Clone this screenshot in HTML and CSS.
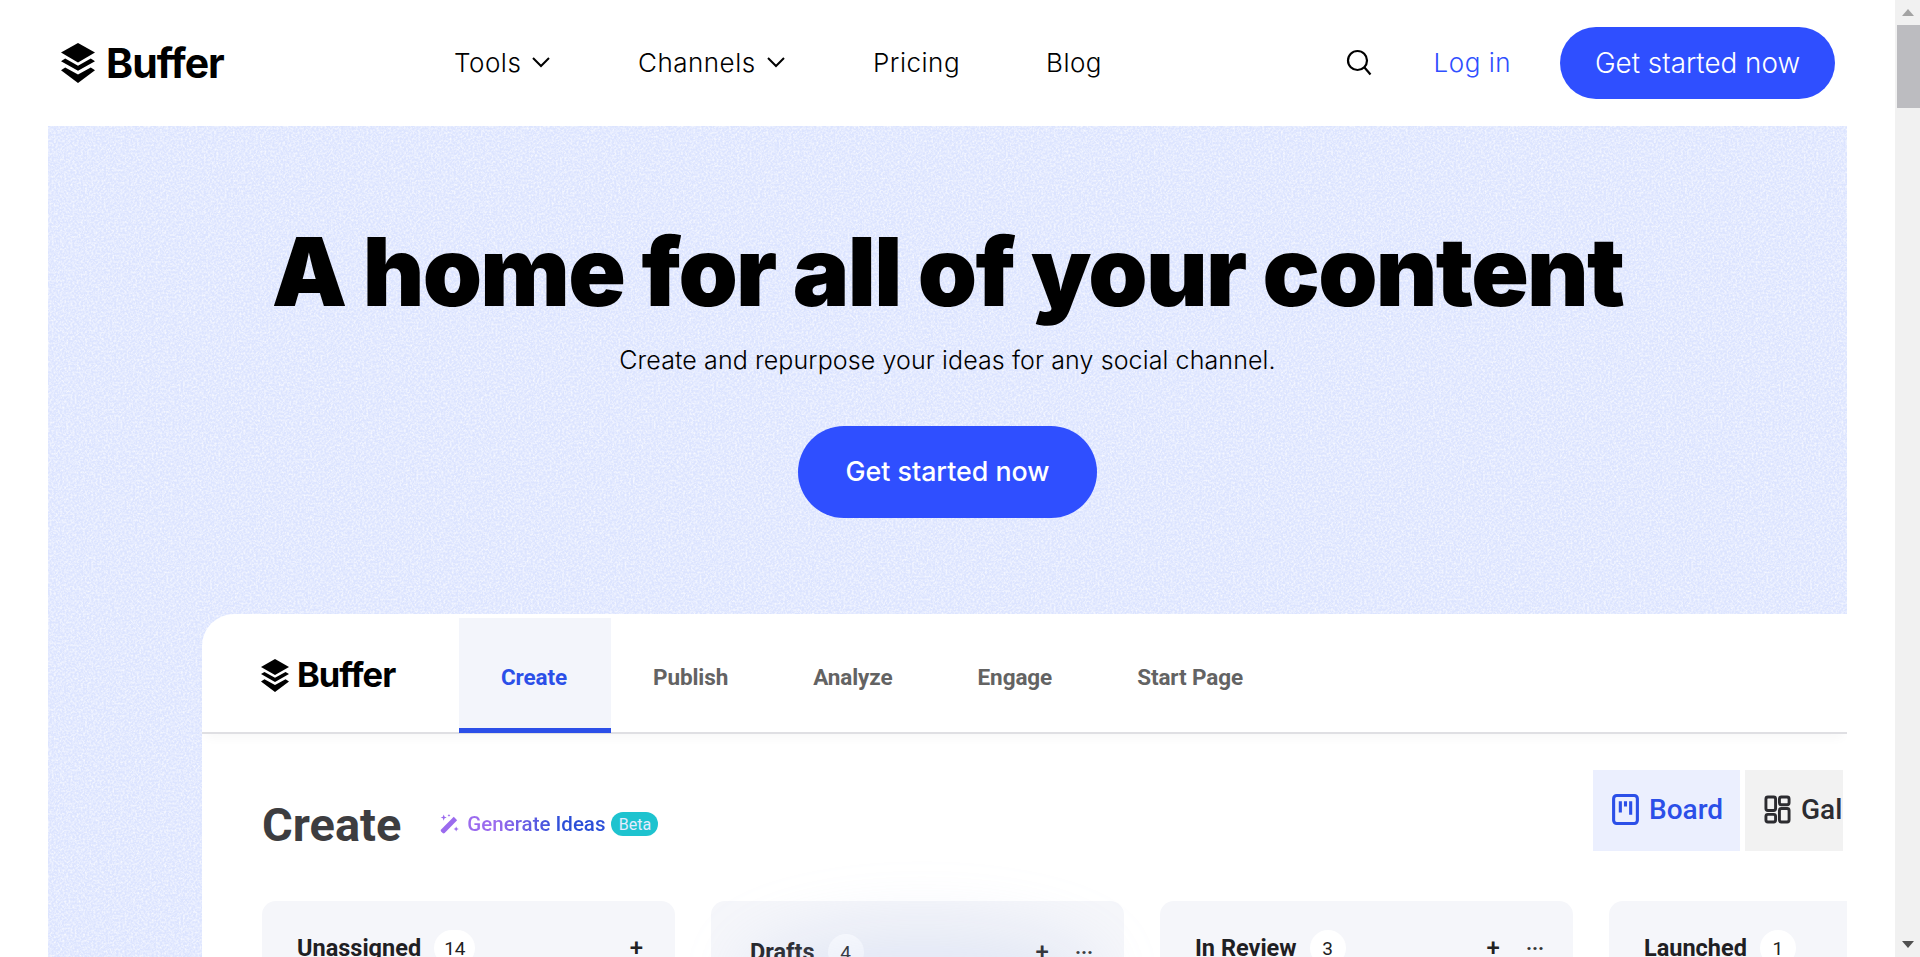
FILE: index.html
```html
<!DOCTYPE html>
<html lang="en">
<head>
<meta charset="utf-8">
<title>Buffer</title>
<link rel="stylesheet" href="styles.css">
</head>
<body>
<div class="page">
  <div class="main">
    <header class="site-header">
      <a class="logo">
        <svg class="logo-mark" viewBox="0 0 34 40"><path d="M17 0 34 9.6 17 19.4 0 9.6Z"/><path d="M4.2 15.6 17 22.8 29.8 15.6 34 18.2 17 27.8 0 18.2Z"/><path d="M4.2 24.6 17 31.6 29.8 24.6 34 27.2 17 40 0 27.2Z"/></svg>
        <span class="logo-text">Buffer</span>
      </a>
      <nav class="site-nav">
        <a class="nav-item nav-tools">Tools <svg class="chev" viewBox="0 0 20 12"><path d="M2 2l8 8 8-8"/></svg></a>
        <a class="nav-item nav-channels">Channels <svg class="chev" viewBox="0 0 20 12"><path d="M2 2l8 8 8-8"/></svg></a>
        <a class="nav-item nav-pricing">Pricing</a>
        <a class="nav-item">Blog</a>
      </nav>
      <div class="site-actions">
        <svg class="search" viewBox="0 0 26 28"><circle cx="11.5" cy="11.5" r="9.5"/><path d="M18.5 18.5l6 7"/></svg>
        <a class="login">Log in</a>
        <a class="cta cta-small">Get started now</a>
      </div>
    </header>

    <section class="hero">
      <svg class="noise" aria-hidden="true"><filter id="grain" x="0" y="0" width="100%" height="100%"><feTurbulence type="fractalNoise" baseFrequency="0.48" numOctaves="4" seed="9"/><feColorMatrix values="0 0 0 0 1  0 0 0 0 1  0 0 0 0 1  1.500 0 0 0 -0.540"/></filter><rect width="100%" height="100%" filter="url(#grain)"/></svg>
      <h1 class="hero-title">A home for all of your content</h1>
      <p class="hero-sub">Create and repurpose your ideas for any social channel.</p>
      <a class="cta cta-large">Get started now</a>

      <div class="app">
        <div class="app-nav">
          <a class="logo logo-app">
            <svg class="logo-mark" viewBox="0 0 34 40"><path d="M17 0 34 9.6 17 19.4 0 9.6Z"/><path d="M4.2 15.6 17 22.8 29.8 15.6 34 18.2 17 27.8 0 18.2Z"/><path d="M4.2 24.6 17 31.6 29.8 24.6 34 27.2 17 40 0 27.2Z"/></svg>
            <span class="logo-text">Buffer</span>
          </a>
          <a class="tab tab-active">Create</a>
          <a class="tab">Publish</a>
          <a class="tab">Analyze</a>
          <a class="tab">Engage</a>
          <a class="tab">Start Page</a>
        </div>
        <div class="app-body">
          <div class="toolbar">
            <h2 class="app-title">Create</h2>
            <div class="ideas">
              <svg class="wand" viewBox="0 0 24 24"><path d="M17.500 4l3.500 3.500L8 20.800a1.500 1.500 0 0 1-2.100 0l-1.600-1.600a1.500 1.500 0 0 1 0-2.100Z"/><path d="M7 1.500l.9 2.300 2.300.9-2.300.9L7 8l-.9-2.400-2.300-.9 2.300-.9ZM20 14l.8 1.900 1.900.8-1.900.8-.8 1.900-.8-1.900-1.900-.8 1.900-.8ZM12.500 1l.5 1 1 .5-1 .5-.5 1-.5-1-1-.5 1-.5Z"/></svg>
              <span class="ideas-text">Generate Ideas</span>
              <span class="beta">Beta</span>
            </div>
            <div class="views">
              <a class="view view-active">
                <svg class="view-icon" viewBox="0 0 26 30"><rect x="1.500" y="1.500" width="23" height="27" rx="3"/><path d="M8 7v11M13 7v5M18 7v13"/></svg>
                Board
              </a>
              <a class="view">
                <svg class="view-icon" viewBox="0 0 28 30"><rect x="2" y="2" width="10" height="14" rx="2"/><rect x="16" y="2" width="10" height="8" rx="2"/><rect x="2" y="20" width="10" height="8" rx="2"/><rect x="16" y="14" width="10" height="14" rx="2"/></svg>
                Gallery
              </a>
            </div>
          </div>
          <div class="board">
            <div class="col">
              <div class="col-head"><span class="col-name">Unassigned</span><span class="count">14</span><span class="plus plus-solo">+</span></div>
            </div>
            <div class="col">
              <div class="col-head col-head-low"><span class="col-name">Drafts</span><span class="count">4</span><span class="plus">+</span><span class="more">···</span></div>
            </div>
            <div class="col">
              <div class="col-head"><span class="col-name">In Review</span><span class="count">3</span><span class="plus">+</span><span class="more">···</span></div>
            </div>
            <div class="col">
              <div class="col-head"><span class="col-name">Launched</span><span class="count">1</span></div>
            </div>
          </div>
          <div class="glow"></div>
        </div>
      </div>
    </section>
  </div>
  <div class="scrollbar">
    <span class="arrow arrow-up"></span>
    <span class="thumb"></span>
    <span class="arrow arrow-down"></span>
  </div>
</div>
</body>
</html>
```
FILE: styles.css
```css
* { box-sizing: border-box; }
html, body { margin: 0; height: 100%; overflow: hidden; background: #fff; }
body { font-family: "Inter", "Liberation Sans", sans-serif; color: #000; }
.page { display: flex; height: 957px; }
.main { flex: 1; min-width: 0; display: flex; flex-direction: column; }

.site-header { height: 126px; flex: none; display: flex; align-items: center; padding: 0 60px 0 61px; }
.logo { display: flex; align-items: center; gap: 11px; width: 393px; flex: none; }
.logo-mark { width: 34px; height: 40px; fill: #000; flex: none; }
.logo-text { font: 700 41px/1 "Inter", sans-serif; letter-spacing: -1px; }
.site-nav { display: flex; align-items: center; font-size: 26px; font-weight: 300; letter-spacing: .5px; padding-bottom: 2px; }
.nav-item { display: flex; align-items: center; gap: 10px; }
.nav-tools { width: 184px; }
.nav-channels { width: 235px; }
.nav-pricing { width: 173px; }
.chev { width: 20px; height: 12px; fill: none; stroke: #000; stroke-width: 2; }
.site-actions { margin-left: auto; display: flex; align-items: center; }
.search { width: 26px; height: 28px; fill: none; stroke: #000; stroke-width: 2.200; margin-right: 62px; }
.login { color: #2f4fff; font-size: 26px; font-weight: 300; letter-spacing: .5px; margin-right: 49px; padding-bottom: 2px; }
.cta { display: flex; align-items: center; justify-content: center; background: #2f4fff; color: #fff; border-radius: 46px; font-size: 27.800px; font-weight: 300; }
.cta-small { width: 275px; height: 72px; border-radius: 36px; }

.hero { position: relative; flex: 1; min-height: 0; margin: 0 48px; background: #dce4ff; overflow: hidden; display: flex; flex-direction: column; align-items: center; padding-top: 84px; }
.noise { position: absolute; inset: 0; width: 100%; height: 100%; }
.hero-title { position: relative; margin: 0; font-size: 95px; line-height: 124px; font-weight: 900; letter-spacing: -1.700px; white-space: nowrap; color: #000; }
.hero-sub { position: relative; margin: 9px 0 0; font-size: 25px; line-height: 34px; font-weight: 300; letter-spacing: .11px; }
.cta-large { position: relative; width: 299px; height: 92px; margin-top: 49px; padding-bottom: 2px; font-size: 26.800px; font-weight: 500; flex: none; }

.app { position: relative; align-self: flex-start; flex: none; margin: 96px 0 0 154px; width: 1645px; height: 400px; background: #fff; border-radius: 32px 0 0 0; font-family: "Roboto", sans-serif; }
.app-nav { height: 120px; display: flex; align-items: center; padding: 4px 0 0 59px; border-bottom: 2px solid #dfdfe3; box-shadow: 0 8px 10px -4px rgba(0,0,0,.03); }
.logo-app { width: 198px; gap: 8px; height: 116px; }
.logo-app .logo-mark { width: 28px; height: 33px; }
.logo-app .logo-text { font-size: 34.500px; letter-spacing: -1px; }
.tab { display: flex; align-items: center; height: 115px; padding: 4px 42px 0; font-size: 22.500px; font-weight: 700; color: #636363; letter-spacing: -.1px; margin-right: 1px; }
.tab-active { background: #f3f5fb; color: #2b4fe8; border-bottom: 5px solid #2b4fe8; align-self: flex-end; margin-bottom: -1px; margin-right: 0; padding: 7px 2px 0 0; justify-content: center; width: 152px; height: 115px; }
.app-body { position: relative; height: 280px; padding: 36px 4px 0 60px; }
.toolbar { display: flex; align-items: center; height: 81px; }
.app-title { margin: 28px 0 0; font-size: 47px; font-weight: 700; color: #3d3d40; line-height: 1; }
.ideas { display: flex; align-items: center; margin: 27px 0 0 36px; }
.wand { width: 23px; height: 25px; fill: #9b6bee; }
.ideas-text { margin-left: 7px; font-size: 20.500px; font-weight: 500; background: linear-gradient(90deg, #9b6bee 20%, #2b4fd8 70%); -webkit-background-clip: text; background-clip: text; color: transparent; }
.beta { margin-left: 6px; display: flex; align-items: center; justify-content: center; width: 47px; height: 24px; border-radius: 12px; background: #1ec3cf; color: #e4ecff; font-size: 16px; }
.views { margin-left: auto; display: flex; gap: 5px; width: 250px; overflow: hidden; flex: none; }
.view { display: flex; align-items: center; gap: 10px; flex: none; height: 81px; padding: 0 16px 2px 19px; font-size: 28px; font-weight: 500; background: #f2f2f2; color: #2c2c30; }
.view-active { width: 147px; background: #ebeffe; color: #2b4fe8; }
.view-icon { width: 27px; height: 31px; fill: none; stroke: currentColor; stroke-width: 3; flex: none; }
.board { display: flex; gap: 36px; margin-top: 50px; margin-right: -4px; overflow: hidden; }
.col { flex: 0 0 413px; height: 160px; background: #f5f6fa; border-radius: 14px 14px 0 0; padding: 31px 29px 0 35px; }
.col-head { display: flex; align-items: center; height: 32px; }
.col-head-low { margin-top: 4px; padding: 0 2px 0 4px; }
.col-name { font-size: 23.500px; font-weight: 700; color: #1f2023; }
.count { margin-left: 13px; min-width: 36px; padding: 0 10px; height: 36px; border-radius: 18px; background: #fff; font-size: 19px; display: flex; align-items: center; justify-content: center; color: #222; }
.plus { margin-left: auto; font-size: 24px; font-weight: 500; color: #222; }
.plus-solo { margin-right: 3px; }
.more { margin-left: 26px; font-size: 20px; font-weight: 700; color: #333; }
.glow { position: absolute; left: 540px; top: 190px; width: 360px; height: 110px; background: rgba(170,185,230,.22); filter: blur(30px); border-radius: 50%; }

.scrollbar { position: relative; width: 25px; flex: none; background: #f1f1f1; display: flex; flex-direction: column; align-items: center; }
.arrow { width: 0; height: 0; border-left: 6px solid transparent; border-right: 6px solid transparent; }
.arrow-up { margin-top: 9px; border-bottom: 7px solid #a3a3a3; }
.thumb { width: 23px; height: 83px; margin: 9px 0 0 2px; background: #bcbcc0; }
.arrow-down { margin-top: auto; margin-bottom: 9px; border-top: 7px solid #505050; }
```
